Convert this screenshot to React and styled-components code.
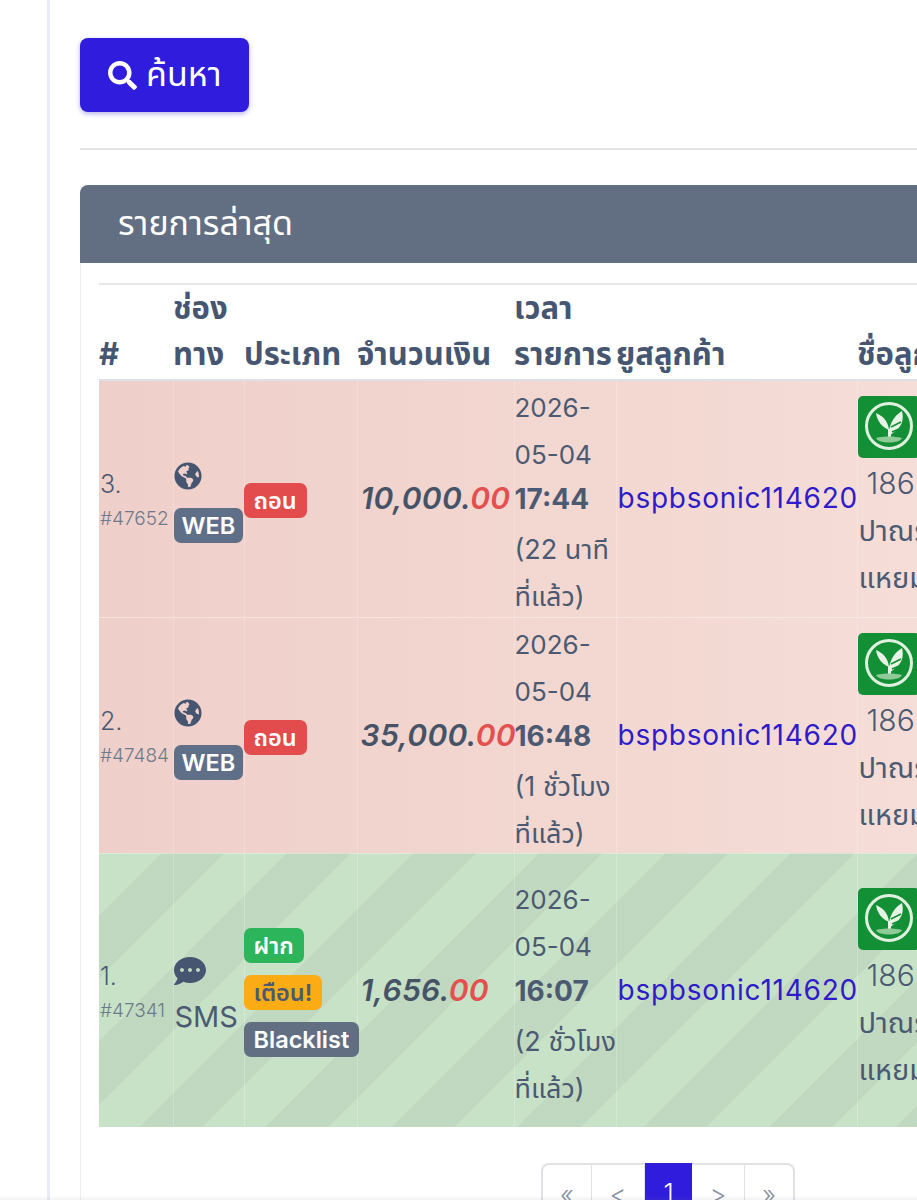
import styled, { createGlobalStyle } from 'styled-components';
import { FaSearch, FaGlobeAmericas, FaCommentDots } from 'react-icons/fa';

const GlobalStyle = createGlobalStyle`
  html, body {
    margin: 0;
    padding: 0;
    background: #fff;
    overflow: hidden;
  }
  body {
    font-family: Inter, 'Noto Sans', 'Noto Sans Thai', 'DejaVu Sans', sans-serif;
    color: #4b5a72;
  }
`;

const Page = styled.div`
  position: relative;
  width: 917px;
  height: 1200px;
  overflow: hidden;
  display: flex;
`;

const BottomShade = styled.div`
  position: absolute;
  left: 0;
  right: 0;
  bottom: 0;
  height: 5px;
  background: linear-gradient(rgba(120, 120, 120, 0), rgba(120, 120, 120, 0.09));
`;

const SideRail = styled.div`
  flex: 0 0 47px;
  border-right: 3px solid #e9ebfa;
`;

const Content = styled.main`
  flex: 0 0 1100px;
  padding: 38px 0 0 30px;
`;

const SearchButton = styled.button`
  display: flex;
  align-items: center;
  gap: 9px;
  width: 169px;
  height: 74px;
  padding: 0 0 0 28px;
  border: 0;
  border-radius: 8px;
  background: #2f1cdc;
  color: #fff;
  font: inherit;
  font-size: 34px;
  box-shadow: 0 2px 5px rgba(50, 40, 180, 0.35);
`;

const Divider = styled.hr`
  margin: 36px 0 35px;
  border: 0;
  border-top: 2px solid #dfe1e5;
`;

const Card = styled.section`
  background: #fff;
`;

const CardHeader = styled.h2`
  margin: 0;
  height: 78px;
  padding: 0 38px;
  display: flex;
  align-items: center;
  background: #626e82;
  border-radius: 8px 8px 0 0;
  color: #fff;
  font-size: 34px;
  font-weight: 400;
`;

const CardBody = styled.div`
  height: 1000px;
  padding: 20px 19px 0 18px;
  border-left: 1px solid #eceef3;
`;

const Table = styled.table`
  width: 1000px;
  table-layout: fixed;
  border-collapse: collapse;
  border-top: 2px solid #e6e7ea;
`;

const Th = styled.th`
  padding: 0 0 3px;
  text-align: left;
  vertical-align: bottom;
  font-size: 31px;
  font-weight: 700;
  line-height: 45.5px;
  color: #465670;
  border-bottom: 2px solid #dde0e6;
`;

const Row = styled.tr`
  background: ${(p) =>
    p.$tone === 'green'
      ? `linear-gradient(135deg, transparent 25%, rgba(90, 90, 90, 0.07) 25%, rgba(90, 90, 90, 0.07) 50%, transparent 50%, transparent 75%, rgba(90, 90, 90, 0.07) 75%) 0 0 / 126px 126px, #c8e2c7`
      : 'linear-gradient(90deg, #efcfc9, #f7e0da)'};
  border-bottom: 1px solid rgba(255, 255, 255, 0.35);
`;

const Cell = styled.td`
  padding: 0;
  vertical-align: middle;
  font-size: 27px;
  line-height: 47px;
  border-right: 1px solid rgba(255, 255, 255, 0.22);
`;

const IndexBlock = styled.div`
  padding: 7px 0 0 1px;
`;

const RowNo = styled.div`
  line-height: 34px;
  font-size: 25px;
  font-weight: 300;
`;

const RefNo = styled.div`
  font-size: 19px;
  font-weight: 300;
  line-height: 36px;
  color: #6f7a8a;
  white-space: nowrap;
`;

const ChannelStack = styled.div`
  padding-top: ${(p) => (p.$web ? '7px' : '15px')};
`;

const ChannelIcon = styled.div`
  display: flex;
  font-size: 28px;
  height: 30px;
  align-items: center;
  color: #465670;
  margin-bottom: ${(p) => (p.$web ? '17px' : '7px')};
`;

const ChannelText = styled.div`
  padding-left: 1px;
  font-size: 29px;
`;

const Badge = styled.span`
  display: block;
  width: fit-content;
  height: 35px;
  padding: 0 10px;
  border-radius: 7px;
  background: ${(p) => p.$bg};
  color: ${(p) => p.$fg || '#fff'};
  font-size: 23.5px;
  font-weight: 600;
  line-height: 35px;
  white-space: nowrap;
`;

const WebBadge = styled(Badge)`
  padding: 0 8px;
`;

const BadgeStack = styled.div`
  display: flex;
  flex-direction: column;
  align-items: flex-start;
  gap: 12px;
  margin-left: -1px;
  padding-top: 4px;
`;

const Amount = styled.div`
  margin-left: 3px;
  font-size: 30px;
  font-style: italic;
  font-weight: 600;
  letter-spacing: 0.3px;
  white-space: nowrap;
  color: #465366;
`;

const Cents = styled.span`
  color: #e2504f;
`;

const TimeBlock = styled.div`
  margin: 2px 0 -5px;
`;

const DateLine = styled.div`
  font-size: 26px;
`;

const TimeStrong = styled.div`
  margin: -2px 0 3px;
  font-size: 28px;
  font-weight: 700;
`;

const AgoLine = styled.div`
  white-space: nowrap;
`;

const UserLink = styled.a`
  padding-left: 1px;
  color: #2f1cc8;
  font-size: 28px;
  letter-spacing: 0.75px;
  white-space: nowrap;
`;

const BankLogo = styled.svg`
  display: block;
  width: 62px;
  height: 62px;
  margin-bottom: 2px;
`;

const Account = styled.div`
  padding-left: 9px;
  font-size: 30px;
  font-weight: 300;
  white-space: nowrap;
`;

const Holder = styled.div`
  padding-left: 1px;
  white-space: nowrap;
  font-size: 29px;
`;

const Pagination = styled.nav`
  display: flex;
  width: 254px;
  height: 60px;
  margin: 35px 0 0 442px;
  border: 2px solid #dfe1e5;
  border-bottom: 0;
  border-radius: 8px 8px 0 0;
  box-sizing: border-box;
`;

const PageItem = styled.span`
  flex: 0 0 ${(p) => p.$w}px;
  display: flex;
  justify-content: center;
  padding-top: 14px;
  box-sizing: border-box;
  font-size: 26px;
  font-weight: 300;
  color: ${(p) => (p.$active ? '#fff' : '#8a93a3')};
  background: ${(p) => (p.$active ? '#2f1cdc' : 'transparent')};
  margin-top: ${(p) => (p.$active ? '-2px' : '0')};
  border-right: ${(p) => (p.$last || p.$active ? '0' : '1px solid #dfe1e5')};
`;

function KBank() {
  return (
    <BankLogo viewBox="0 0 62 62">
      <rect width="62" height="62" rx="5" fill="#138f35" />
      <circle cx="31" cy="30" r="22.5" fill="none" stroke="#dff0de" strokeWidth="3" />
      <path d="M18 17c7 3 12 8 13 17-7-3-12-9-13-17z" fill="#e6f3e5" />
      <path d="M44 15c2 8 0 14-5 19l-8 6c-1-9 4-20 13-25z" fill="#e6f3e5" />
      <path d="M33 31l10-5M34 36l7-3" stroke="#138f35" strokeWidth="1.6" />
      <path d="M30 33h3v9h-3z" fill="#e6f3e5" />
      <path d="M18 42c8-2 18-2 26 0-2 6-24 6-26 0z" fill="#8fcb97" />
    </BankLogo>
  );
}

const rows = [
  { no: '3.', ref: '#47652', channel: 'web', types: [{ t: 'ถอน', bg: '#e24c4c' }], whole: '10,000', time: '17:44', ago: '(22 นาที', tone: 'red', h: 237 },
  { no: '2.', ref: '#47484', channel: 'web', types: [{ t: 'ถอน', bg: '#e24c4c' }], whole: '35,000', time: '16:48', ago: '(1 ชั่วโมง', tone: 'red', h: 236 },
  {
    no: '1.',
    ref: '#47341',
    channel: 'sms',
    types: [
      { t: 'ฝาก', bg: '#2cb55a' },
      { t: 'เตือน!', bg: '#fbab14', fg: '#4b5a72' },
      { t: 'Blacklist', bg: '#626e82' },
    ],
    whole: '1,656',
    time: '16:07',
    ago: '(2 ชั่วโมง',
    tone: 'green',
    h: 274,
  },
];

export default function App() {
  return (
    <Page>
      <GlobalStyle />
      <SideRail />
      <Content>
        <SearchButton>
          <FaSearch size={29} />
          ค้นหา
        </SearchButton>
        <Divider />
        <Card>
          <CardHeader>รายการล่าสุด</CardHeader>
          <CardBody>
            <Table>
              <colgroup>
                <col width="74" />
                <col width="71" />
                <col width="113" />
                <col width="157" />
                <col width="102" />
                <col width="241" />
                <col width="242" />
              </colgroup>
              <thead>
                <tr>
                  <Th>#</Th>
                  <Th>ช่องทาง</Th>
                  <Th>ประเภท</Th>
                  <Th>จำนวนเงิน</Th>
                  <Th>เวลารายการ</Th>
                  <Th>ยูสลูกค้า</Th>
                  <Th>ชื่อลูกค้า</Th>
                </tr>
              </thead>
              <tbody>
                {rows.map((r) => {
                  const web = r.channel === 'web';
                  return (
                    <Row key={r.ref} $tone={r.tone} style={{ height: r.h }}>
                      <Cell>
                        <IndexBlock>
                          <RowNo>{r.no}</RowNo>
                          <RefNo>{r.ref}</RefNo>
                        </IndexBlock>
                      </Cell>
                      <Cell>
                        <ChannelStack $web={web}>
                          <ChannelIcon $web={web}>{web ? <FaGlobeAmericas /> : <FaCommentDots size={32} />}</ChannelIcon>
                          {web ? <WebBadge $bg="#5f6f88">WEB</WebBadge> : <ChannelText>SMS</ChannelText>}
                        </ChannelStack>
                      </Cell>
                      <Cell>
                        <BadgeStack>
                          {r.types.map((b) => (
                            <Badge key={b.t} $bg={b.bg} $fg={b.fg}>
                              {b.t}
                            </Badge>
                          ))}
                        </BadgeStack>
                      </Cell>
                      <Cell>
                        <Amount>
                          {r.whole}.<Cents>00</Cents>
                        </Amount>
                      </Cell>
                      <Cell>
                        <TimeBlock>
                          <DateLine>2026-</DateLine>
                          <DateLine>05-04</DateLine>
                          <TimeStrong>{r.time}</TimeStrong>
                          <AgoLine>{r.ago}</AgoLine>
                          <AgoLine>ที่แล้ว)</AgoLine>
                        </TimeBlock>
                      </Cell>
                      <Cell>
                        <UserLink>bspbsonic114620</UserLink>
                      </Cell>
                      <Cell>
                        <KBank />
                        <Account>186</Account>
                        <Holder>ปาณรัตน์</Holder>
                        <Holder>แหยม</Holder>
                      </Cell>
                    </Row>
                  );
                })}
              </tbody>
            </Table>
            <Pagination>
              <PageItem $w={49}>«</PageItem>
              <PageItem $w={53}>&lt;</PageItem>
              <PageItem $w={47} $active>
                1
              </PageItem>
              <PageItem $w={53}>&gt;</PageItem>
              <PageItem $w={48} $last>
                »
              </PageItem>
            </Pagination>
          </CardBody>
        </Card>
      </Content>
      <BottomShade />
    </Page>
  );
}
